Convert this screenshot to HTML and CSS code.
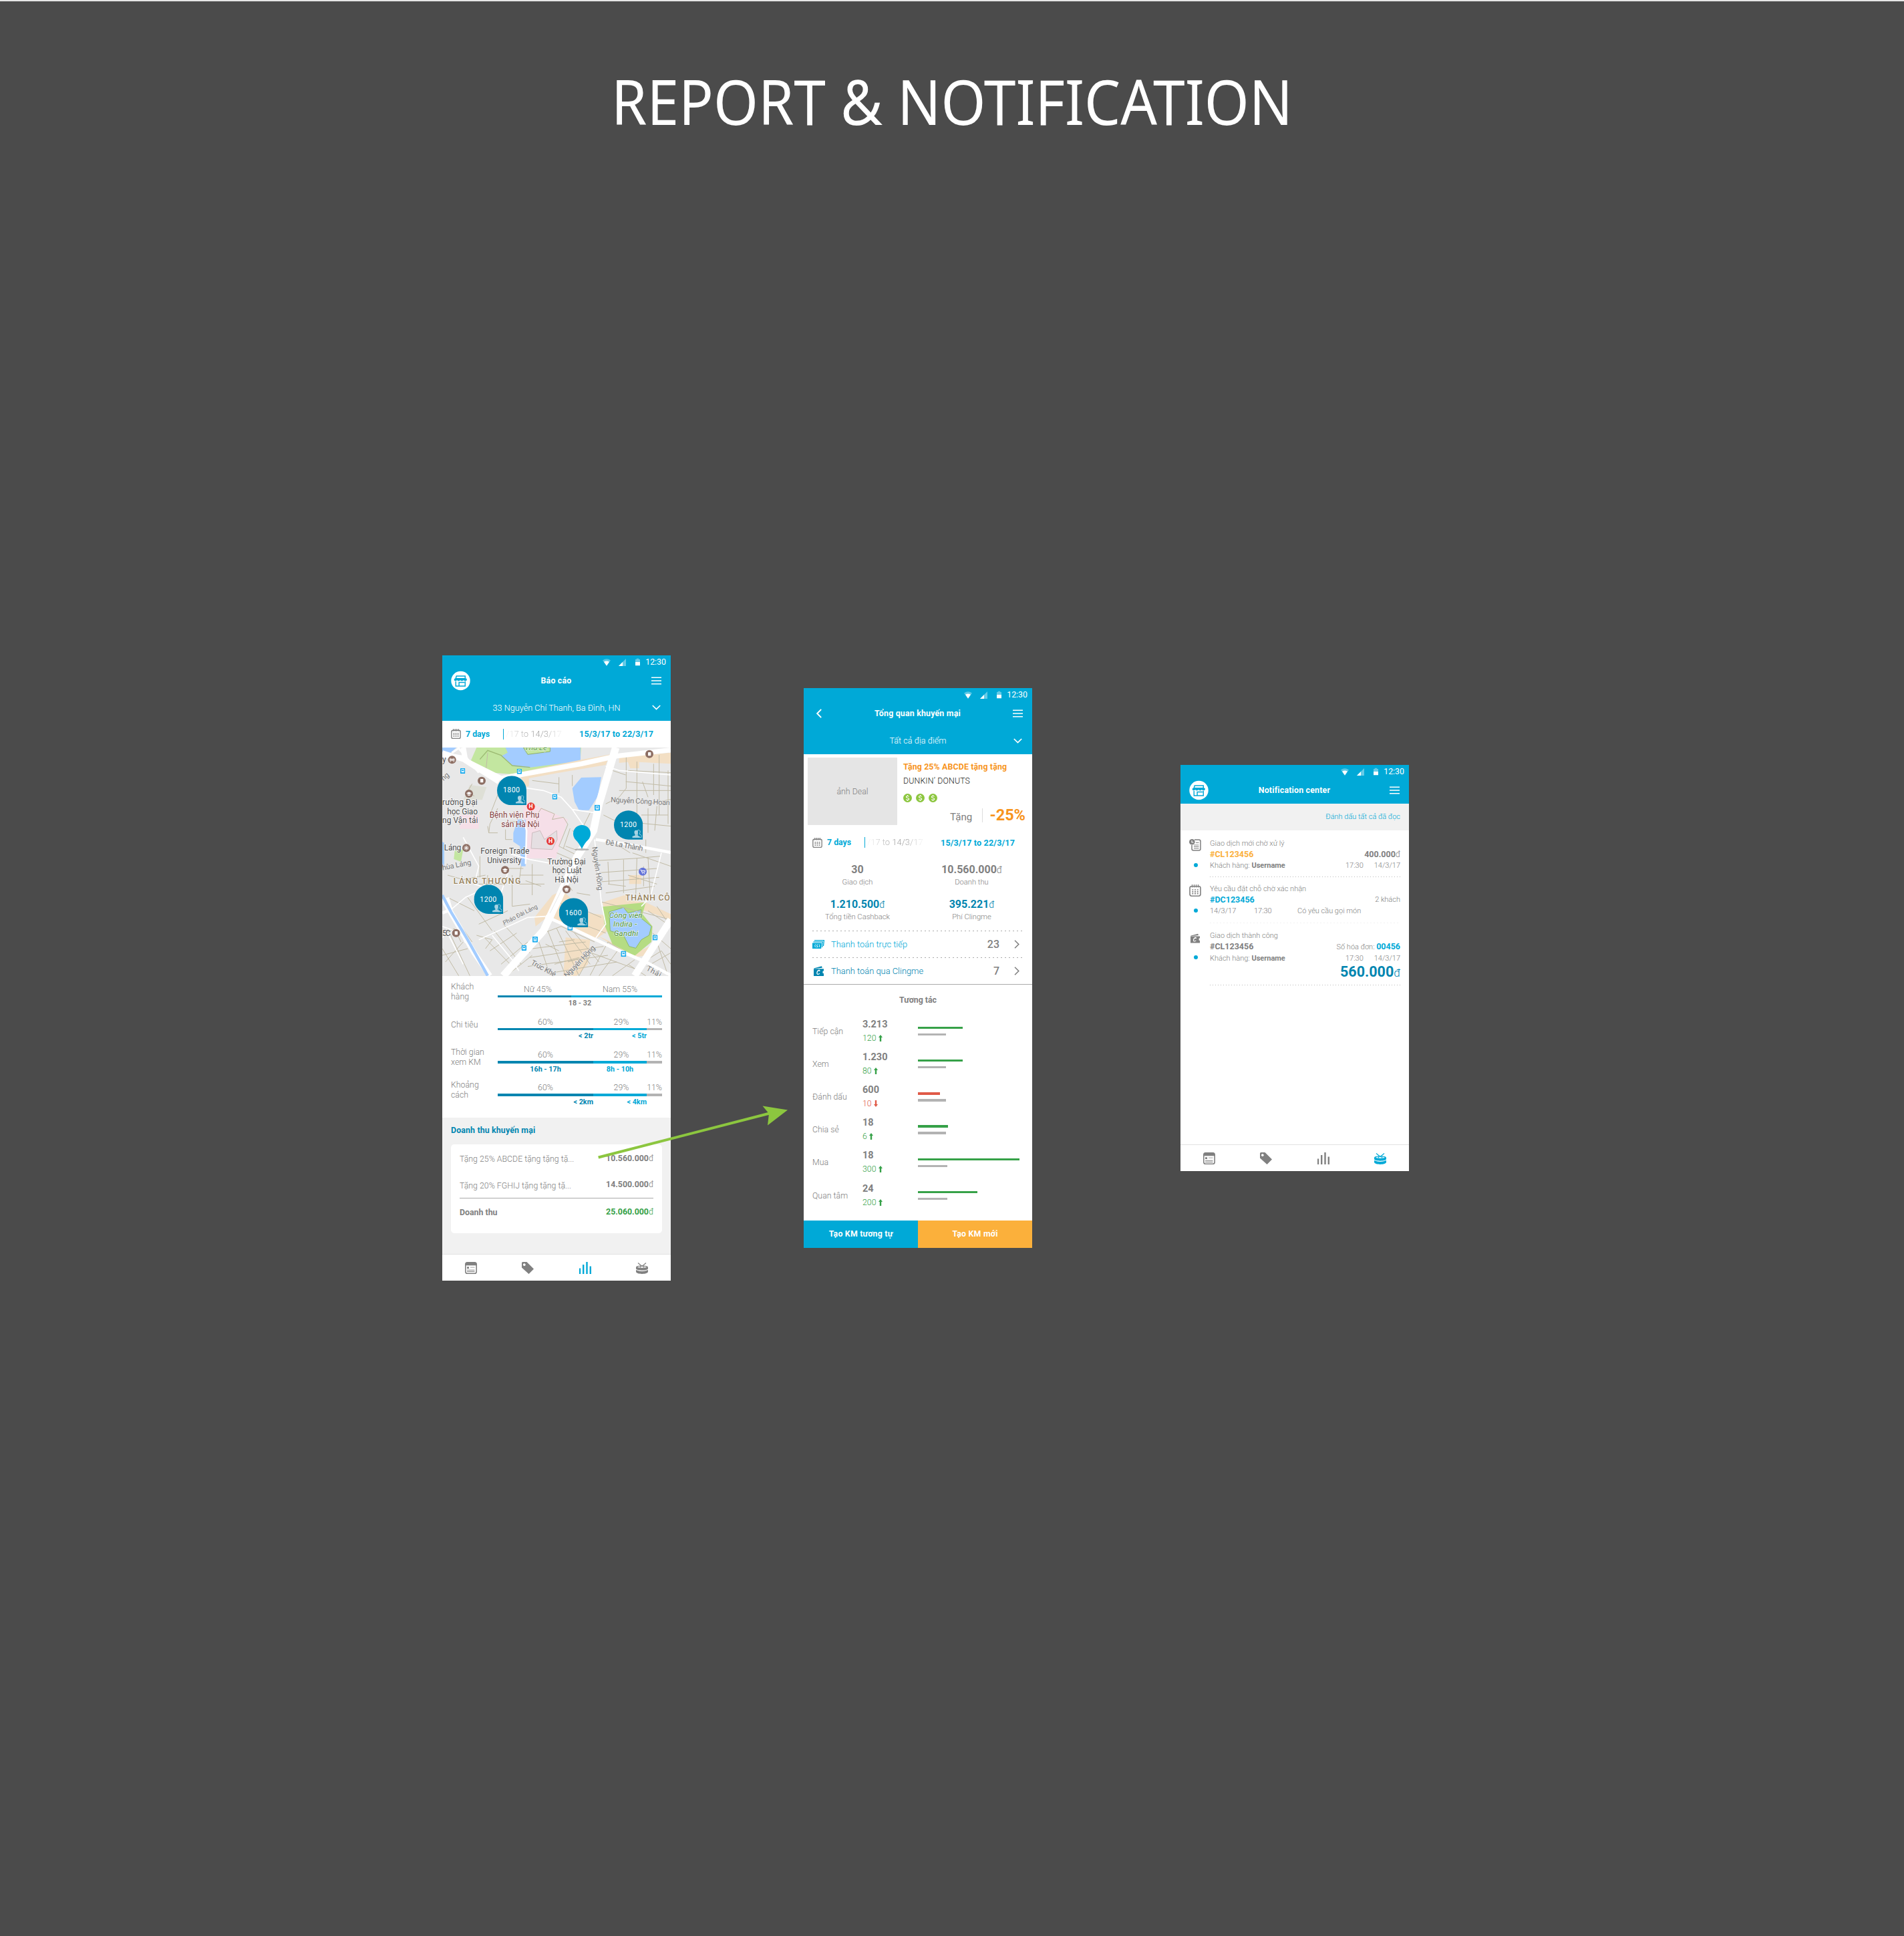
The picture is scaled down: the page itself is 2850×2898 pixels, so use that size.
FILE: index.html
```html
<!DOCTYPE html>
<html lang="vi">
<head>
<meta charset="utf-8">
<title>Report &amp; Notification</title>
<link rel="stylesheet" href="styles.css">
</head>
<body>
<svg class="symbols" aria-hidden="true">
  <symbol id="wifi" viewBox="0 0 12 11"><path d="M0 2.500Q6-2 12 2.500L6 11z" fill="#fff" opacity=".35"/><path d="M2 4.800Q6 2 10 4.800L6 10.500z" fill="#fff"/></symbol>
  <symbol id="signal" viewBox="0 0 11 11"><path d="M0 11L11 0V11z" fill="#fff" opacity=".4"/><path d="M0 11L6 5V11z" fill="#fff"/></symbol>
  <symbol id="battery" viewBox="0 0 8 12"><path d="M0 1.500H2V0H6V1.500H8V6H0z" fill="#fff" opacity=".4"/><path d="M0 6H8V12H0z" fill="#fff"/></symbol>
  <symbol id="shop" viewBox="0 0 30 30"><circle cx="15" cy="15" r="14.700" fill="#fff"/><g fill="none" stroke="#00a9d7" stroke-width="1.500"><path d="M8.500 7.700H22V11.500H7.500z"/><path d="M6 12.200H24M7.500 16V23.300H22V16M12.500 23V17.500H21"/></g><path d="M5 12H24.500V14.500L22 15.500L19.500 14.200L17 15.500L14.500 14.200L12 15.500L9.500 14.200L7 15.500L5 14.500z" fill="#00a9d7"/></symbol>
  <symbol id="menu" viewBox="0 0 15 12"><path d="M0 1.200H15M0 6H15M0 10.800H15" stroke="#fff" stroke-width="1.500"/></symbol>
  <symbol id="down" viewBox="0 0 13 8"><path d="M.8 1L6.500 6.500L12.200 1" fill="none" stroke="#fff" stroke-width="1.700"/></symbol>
  <symbol id="back" viewBox="0 0 8 14"><path d="M7.200 .8L1.200 7L7.200 13.200" fill="none" stroke="#fff" stroke-width="1.900"/></symbol>
  <symbol id="next" viewBox="0 0 8 14"><path d="M.8 .8L7 7L.8 13.200" fill="none" stroke="#808080" stroke-width="1.700"/></symbol>
  <symbol id="calendar" viewBox="0 0 18 18"><rect x="1" y="2.700" width="16" height="14.500" rx="2.600" fill="none" stroke="currentColor" stroke-width="1.600"/><path d="M4.500 0V4.500M7.500 0V4.500M10.500 0V4.500M13.500 0V4.500" stroke="currentColor" stroke-width="1.300"/><path d="M4.300 8H6.300M8 8H10M11.700 8H13.700M4.300 10.800H6.300M8 10.800H10M11.700 10.800H13.700M4.300 13.600H6.300M8 13.600H10M11.700 13.600H13.700" stroke="currentColor" stroke-width="1.700"/></symbol>
  <symbol id="news" viewBox="0 0 18 18"><rect x=".8" y=".8" width="16.400" height="16.400" rx="2.800" fill="none" stroke="currentColor" stroke-width="1.600"/><path d="M1 2.500Q1 .5 3 .5H15Q17 .5 17 2.500V5.200H1z" fill="currentColor"/><path d="M3 7.300H6V10H3z" fill="currentColor"/><path d="M8 8.200H14.500" stroke="currentColor" stroke-width="1.400" opacity=".5"/><path d="M3 12.200H14.500M3 14.500H14.500" stroke="currentColor" stroke-width="1.100"/></symbol>
  <symbol id="tag" viewBox="0 0 18 18"><path fill-rule="evenodd" d="M0 1.500Q0 0 1.500 0H7.500L18 10.500L10.500 18L0 8.500zM3.800 2.200A1.900 1.900 0 1 0 3.810 2.200z" fill="currentColor"/></symbol>
  <symbol id="bars" viewBox="0 0 18 18"><path d="M1 18V9.500M6.200 18V4M11.500 18V0M16.800 18V6.500" stroke="currentColor" stroke-width="2.400"/></symbol>
  <symbol id="drum" viewBox="0 0 18 18"><path d="M0 8C0 4.200 18 4.200 18 8V10C18 13.500 0 13.500 0 10zM0 12Q9 16.200 18 12V14.500C18 19 0 19 0 14.500z" fill="currentColor"/><ellipse cx="9" cy="7.600" rx="6.800" ry="1.300" fill="#fff" opacity=".85"/><path d="M3 1.500L9 6.500L15 1.500M6.500 6V8.500M11.500 6V8.500" fill="none" stroke="currentColor" stroke-width="1.200"/></symbol>
  <symbol id="receipt" viewBox="0 0 18 18"><path d="M8 1H14.500Q17 1 17 3.500V14.500Q17 17 14.500 17H6.500Q4 17 4 14.500V9" fill="none" stroke="currentColor" stroke-width="1.500"/><circle cx="4.300" cy="4.300" r="4.300" fill="currentColor"/><path d="M4 2V5H6.500" fill="none" stroke="#fff" stroke-width="1.100"/><path d="M10 5.500H14.500M7 9H14.500M7 11.500H14.500M7 14H14.500" stroke="currentColor" stroke-width="1"/></symbol>
  <symbol id="wallet" viewBox="0 0 15 15"><path d="M0 3.500L12 .2L12.800 2.800L1 3.900zM0 4.300H15V7.500H13.500V11H15V15H0z" fill="currentColor"/><path d="M8.800 6.200Q5.800 6.500 5 9.500Q4.500 12.500 6.500 12.300Q8 12.200 8.800 11M8.800 6.200V8" fill="none" stroke="#fff" stroke-width="1.300"/></symbol>
  <symbol id="cash" viewBox="0 0 18 13"><path d="M3 .6H17.500L16.500 9M1.500 2.800H15.500L14.800 11" fill="none" stroke="currentColor" stroke-width="1.200"/><path d="M0 4.500H14L13.200 13H0z" fill="currentColor"/><path d="M4.500 6.500Q3 9 4.500 11M10 6.500Q11.500 9 10 11M8.200 7Q6 7 6.500 8.600Q8.500 9.300 8 10.500Q7 11 6 10.500" fill="none" stroke="#fff" stroke-width=".9"/></symbol>
  <symbol id="coin" viewBox="0 0 13 13"><circle cx="6.500" cy="6.500" r="6.500" fill="#8cc63f"/><path d="M8.600 4.300Q6.500 2.700 4.600 4.200Q4 6 6.500 6.500Q9.200 7 8.500 8.800Q6.500 10.400 4.300 8.800M6.500 2V3.300M6.500 9.700V11" fill="none" stroke="#fff" stroke-width="1.100"/></symbol>
  <symbol id="up" viewBox="0 0 6 10"><path d="M3 0L6 4H4.200V10H1.800V4H0z" fill="currentColor"/></symbol>
  <symbol id="people" viewBox="0 0 46 40"><path d="M26 2Q35-2 38 6Q39 14 34 20L45 27V36H26z" fill="none" stroke="#a7d3e3" stroke-width="3"/><path d="M10 14Q9 2 19 2Q28 2 27 14Q26 20 23 23V27L36 32V38H0V32L14 27V23Q11 20 10 14z" fill="#a7d3e3"/></symbol>
  <symbol id="bus" viewBox="0 0 22 24"><rect width="22" height="24" rx="2" fill="#13a9ee"/><rect x="4.500" y="4" width="13" height="15" rx="2" fill="#fff"/><path d="M6.500 7H15.500V12H6.500zM7 14.500H9.500V16.500H7zM12.500 14.500H15V16.500H12.500z" fill="#13a9ee"/></symbol>
  <symbol id="school" viewBox="0 0 38 38"><circle cx="19" cy="19" r="18" fill="#8d6e63"/><path d="M7 17L19 11L31 17L19 23zM12 21L19 25L26 21V26Q19 31 12 26z" fill="#fff"/></symbol>
  <symbol id="place" viewBox="0 0 38 38"><circle cx="19" cy="19" r="18" fill="#8d6e63"/><rect x="13" y="11" width="13" height="16" rx="2" fill="#fff"/></symbol>
  <symbol id="bubble" viewBox="0 0 130 130"><path d="M65 0A65 65 0 0 1 130 65V130H65A65 65 0 0 1 65 0z" fill="#0085b0"/><use href="#people" x="82" y="86" width="43" height="38"/></symbol>
</svg>

<h1 class="title">REPORT &amp; NOTIFICATION</h1>

<main class="canvas">
<section class="phone report">
  <header class="head">
    <div class="status"><svg class="wifi"><use href="#wifi"/></svg><svg class="signal"><use href="#signal"/></svg><svg class="battery"><use href="#battery"/></svg><span>12:30</span></div>
    <div class="bar"><svg class="shop"><use href="#shop"/></svg><b>Báo cáo</b><svg class="menu"><use href="#menu"/></svg></div>
    <div class="place"><span class="address">33 Nguyễn Chí Thanh, Ba Đình, HN</span><svg class="down"><use href="#down"/></svg></div>
  </header>
  <div class="dates"><svg class="cal"><use href="#calendar"/></svg><b class="days">7 days</b><span class="past">/17 to 14/3/17</span><b class="range">15/3/17 to 22/3/17</b></div>

  <svg class="map" viewBox="36 27 1026 1026">
    <rect x="36" y="27" width="1026" height="1026" fill="#e8e8e8"/>
    <!-- parks, water and built-up blocks -->
    <path d="M36 27H100L36 82z" fill="#a3ccff"/>
    <path d="M190 27H660L655 95L385 146L340 146L240 138L165 85z" fill="#c3e6a0"/>
    <path d="M320 27H657V88L420 118L360 112L300 66L330 50z" fill="#a3ccff"/>
    <path d="M400 27L420 58L520 45L520 27z" fill="#c3e6a0" stroke="#8fae68" stroke-width="3"/>
    <path d="M205 80L240 40L300 62L350 108L430 116" fill="none" stroke="#9cba72" stroke-width="4"/>
    <path d="M335 148L660 82L790 58L770 105L560 140L425 165V200L400 205L390 160z" fill="#f3dfc4"/>
    <path d="M830 70L1062 50V100L920 92V120H880L870 92L830 96z" fill="#f3dfc4"/>
    <path d="M400 262L600 350L545 525H410V440L400 390z" fill="#f6dfe8"/><path d="M115 330H200V392H115z" fill="#f6dfe8"/>
    <path d="M440 410L475 400L495 440L550 400L552 440L530 485L435 480z" fill="#e5dfe2" stroke="#cdbcbf" stroke-width="3"/>
    <path d="M160 195L235 205L215 262H130z" fill="#dedfd6"/>
    <path d="M620 210L660 162L750 160L735 245L695 308H650L630 270z" fill="#a3ccff"/>
    <path d="M355 410L375 350H410V560H390L385 470L355 450z" fill="#a3ccff"/>
    <path d="M92 490L130 485L120 540L88 528z" fill="#c3e6a0"/>
    <path d="M36 450L45 455V560L36 580z" fill="#a3ccff"/>
    <path d="M530 690L575 670L690 770L770 780L780 850L720 890L530 790L505 790L455 830L450 790z" fill="#f3dfc4"/>
    <path d="M590 880L700 890L690 1000L640 1052H580z" fill="#f3dfc4"/>
    <path d="M755 722L870 685L860 712L950 722L1062 775V800L945 760L760 740zM875 600H930V640H875z" fill="#f3dfc4"/>
    <path d="M730 870L900 950L1000 905L960 960L890 970z" fill="#f3dfc4"/>
    <path d="M755 742L950 722L935 775L980 830L975 900L900 962L800 910L765 825z" fill="#b5dc83"/>
    <path d="M785 765L850 745L870 770L930 755L925 790L975 830L965 870L930 890L905 928L875 920L850 870L790 850z" fill="#a3ccff" stroke="#8fba65" stroke-width="3"/>
    <!-- small streets -->
    <g fill="none" stroke="#c1bba6" stroke-width="3" stroke-linejoin="round">
      <path d="M240 50L232 130M320 150L250 330M170 190L150 225L180 245M440 175L560 190M560 160V230M620 150V200"/>
      <path d="M480 300L465 325L440 320M480 300L540 325L530 350L580 340L600 372M600 372L560 470L640 510M610 390L580 480M620 400L650 420M590 470L660 495M700 320L650 420M550 500L620 530"/>
      <path d="M862 60V210L830 250L770 280M800 130L860 150M910 90V400M1010 60V330M1050 130V370M870 130L1062 140M860 180L1062 200M830 220H1062M935 180L960 250M985 100V240M760 330L810 355L1062 380M960 300V410M1000 290L990 400M930 330H1050M960 280L1062 260"/>
      <path d="M60 600L130 620L230 600M60 700L180 760M240 380L245 410H285M285 300L250 370L245 410M320 395V440H350M340 360H370M390 560L380 640H495M385 600H490M440 550V690M410 625L480 650M205 515V610M320 570H400M350 600V740L430 730M240 600L235 650M200 640H310"/>
      <path d="M725 535L900 525L1015 515M780 540L785 640M850 530V680M910 525L905 690M960 520L970 700M730 590L1000 570M745 630L1010 610M770 680L990 650M870 600L1000 640M940 560V650M780 640L860 650M800 450L880 500M950 440V500M890 500L1062 560"/>
      <path d="M555 690L520 760M560 720L600 750L580 790M620 670L600 640M640 680L700 690M600 560L640 580M750 720L1062 800"/>
      <path d="M680 760L750 790M690 830L770 860M490 860L570 830L720 900M470 900L520 1050M510 850L590 1052M550 840L650 1052M590 850L700 1000M630 860L740 990M440 930L680 900M430 970L760 920M420 1010L780 960M520 1040L820 990M700 1050L780 900L900 970M740 1052L830 930M650 1052L700 960M800 1052L900 980M680 940L900 1020M560 900L630 890M500 910L560 940M600 990L700 960M540 1000L650 970"/>
      <path d="M36 870L90 840L120 900M36 930L110 1052M60 840L160 1052M130 900L50 990M36 960L150 930M100 800L170 900M150 700L260 850M200 820L330 760M190 870L260 890L230 930M225 880L360 1020M270 850L390 1000M310 820L430 950M250 940L370 860M300 1000L420 900M340 1040L440 960M960 760L1062 830M1000 740L1040 800M980 860L1062 930M940 990L1020 940L1062 1000M955 1010L1060 950M1000 900L1050 1052M870 1000L950 1052"/>
    </g>
    <!-- white roads -->
    <g fill="none" stroke="#fff" stroke-linejoin="round">
      <path d="M36 50L130 80L300 165L660 100L820 65L1062 38" stroke-width="22"/>
      <path d="M36 60L130 75M130 27L140 85L290 180" stroke-width="24"/><path d="M80 50L110 30L200 140" stroke-width="9"/>
      <path d="M815 27L740 280L715 400L640 520L560 700L490 850L310 1052" stroke-width="34"/>
      <path d="M725 440L860 460L1062 498" stroke-width="13"/><path d="M720 440L750 720L770 820L720 890" stroke-width="5"/>
      <path d="M500 785L600 830L800 925L950 990L1062 1050" stroke-width="14"/>
      <path d="M1062 800L900 1052" stroke-width="32"/>
      <path d="M36 700L70 760L180 950L250 1052" stroke-width="24"/><path d="M36 770L75 755L60 700" stroke-width="14"/>
      <path d="M390 205L490 220L570 250L620 305L720 320M620 305L700 420M345 505L430 530L540 550M36 830L120 860L140 905M75 755L140 700L230 660M200 890L420 790L500 785M36 880L60 860L130 1000M260 870L350 980L380 1030M130 430L200 560L180 640L300 680L330 590M770 110L830 130L1062 150M1020 500L970 700L930 740" stroke-width="5"/>
      <path d="M410 550L415 400L400 350" stroke-width="7"/>
    </g>
    <path d="M36 690L75 765L150 890L240 1052" fill="none" stroke="#a3ccff" stroke-width="13"/>
    <path d="M625 560L520 770" stroke="#e8e8e8" stroke-width="3"/>
    <!-- markers -->
    <use href="#bus" x="117" y="120" width="22" height="24"/><use href="#bus" x="371" y="122" width="22" height="24"/><use href="#bus" x="530" y="236" width="22" height="24"/><use href="#bus" x="720" y="284" width="24" height="27"/><use href="#bus" x="598" y="822" width="24" height="26"/><use href="#bus" x="441" y="876" width="24" height="26"/><use href="#bus" x="392" y="914" width="22" height="26"/><use href="#bus" x="838" y="940" width="24" height="27"/><use href="#bus" x="981" y="868" width="22" height="25"/>
    <use href="#place" x="194" y="157" width="38" height="38"/><use href="#place" x="947" y="37" width="38" height="38"/><use href="#place" x="79" y="841" width="38" height="38"/>
    <use href="#school" x="137" y="215" width="38" height="38"/><use href="#school" x="299" y="558" width="38" height="38"/><use href="#school" x="575" y="645" width="38" height="38"/>
    <circle cx="80" cy="82" r="18" fill="#8d6e63"/><path d="M68 82H92M72 74V92M88 74V92M77 76V88M83 76V88" stroke="#fff" stroke-width="3"/>
    <circle cx="144" cy="478" r="18" fill="#8d6e63"/><path d="M144 467V489M133 478H155M136 470L152 486M152 470L136 486" stroke="#fff" stroke-width="3"/>
    <circle cx="936" cy="584" r="18" fill="#6474d8"/><path d="M925 577H930L933 588H944L947 580H932M934 593H937M942 593H945" fill="none" stroke="#fff" stroke-width="3"/>
    <g fill="#e53935"><circle cx="434" cy="292" r="18"/><circle cx="522" cy="447" r="18"/></g>
    <g class="hospital"><text x="434" y="301">H</text><text x="522" y="456">H</text></g>
    <g class="poi">
      <text x="36" y="92" textLength="18">y</text>
      <text x="36" y="285" textLength="158">rường Đại</text><text x="58" y="326" textLength="137">học Giao</text><text x="36" y="367" textLength="160">ng Vận tải</text>
      <text x="44" y="489" textLength="77">Láng</text>
      <text x="208" y="504" textLength="219">Foreign Trade</text><text x="238" y="545" textLength="154">University</text>
      <text x="508" y="551" textLength="172">Trường Đại</text><text x="530" y="592" textLength="132">học Luật</text><text x="541" y="632" textLength="107">Hà Nội</text>
      <text x="36" y="872" textLength="38">5C</text>
    </g>
    <g class="poi med"><text x="248" y="343" textLength="224">Bệnh viện Phụ</text><text x="301" y="383" textLength="171">sản Hà Nội</text></g>
    <g class="green-label"><text x="405" y="39" textLength="102">Thủ Lệ</text><text x="785" y="792" textLength="150">Công viên</text><text x="804" y="832" textLength="106">Indira -</text><text x="806" y="872" textLength="110">Gandhi</text></g>
    <g class="district"><text x="86" y="640" textLength="302">LÁNG THƯỢNG</text><text x="858" y="715" textLength="200">THÀNH CÔ</text></g>
    <g class="street">
      <text transform="translate(42 178) rotate(-42)">ng</text>
      <text transform="translate(792 272) rotate(3)" textLength="266">Nguyễn Công Hoan</text>
      <text transform="translate(768 462) rotate(10)" textLength="170">Đê La Thành</text>
      <text transform="translate(709 474) rotate(82)" textLength="197">Nguyên Hồng</text>
      <text transform="translate(38 578) rotate(-11)" textLength="132">hùa Láng</text>
      <text transform="translate(314 824) rotate(-27)" textLength="170" class="small">Pháo Đài Láng</text>
      <text transform="translate(432 1000) rotate(28)" textLength="122">Trúc Khê</text>
      <text transform="translate(596 1062) rotate(-46)" textLength="185">Nguyên Hồng</text>
      <text transform="translate(950 1026) rotate(28)" textLength="70">Thái</text>
    </g>
    <!-- customer counts -->
    <use href="#bubble" x="282" y="154" width="132" height="132"/><use href="#bubble" x="807" y="309" width="130" height="132"/><use href="#bubble" x="178" y="643" width="132" height="131"/><use href="#bubble" x="560" y="703" width="131" height="131"/>
    <g class="count"><text x="347" y="229">1800</text><text x="872" y="383">1200</text><text x="243" y="719">1200</text><text x="625" y="779">1600</text></g>
    <ellipse cx="663" cy="485" rx="32" ry="5" fill="#888" opacity=".6"/>
    <path d="M663 482Q650 456 634 440A39 39 0 1 1 692 440Q675 456 663 482z" fill="#00a9d7"/>
  </svg>

  <div class="stats">
    <div class="stat two"><span class="name">Khách<br>hàng</span><div class="vals"><span>Nữ 45%</span><span>Nam 55%</span></div><div class="line"><i></i><i></i></div><div class="caps"><b class="age">18 - 32</b></div></div>
    <div class="stat"><span class="name">Chi tiêu</span><div class="vals"><span>60%</span><span>29%</span><span>11%</span></div><div class="line"><i></i><i></i><i></i></div><div class="caps ends"><b>&lt; 2tr</b><b>&lt; 5tr</b></div></div>
    <div class="stat thick"><span class="name">Thời gian<br>xem KM</span><div class="vals"><span>60%</span><span>29%</span><span>11%</span></div><div class="line"><i></i><i></i><i></i></div><div class="caps"><b>16h - 17h</b><b>8h - 10h</b></div></div>
    <div class="stat thick"><span class="name">Khoảng<br>cách</span><div class="vals"><span>60%</span><span>29%</span><span>11%</span></div><div class="line"><i></i><i></i><i></i></div><div class="caps ends"><b>&lt; 2km</b><b>&lt; 4km</b></div></div>
  </div>

  <div class="revenue">
    <h2>Doanh thu khuyến mại</h2>
    <div class="card">
      <div class="item"><span>Tặng 25% ABCDE tặng tặng tặ...</span><span class="amt"><b>10.560.000</b>đ</span></div>
      <div class="item"><span>Tặng 20% FGHIJ tặng tặng tặ...</span><span class="amt"><b>14.500.000</b>đ</span></div>
      <div class="item total"><b>Doanh thu</b><span class="amt green"><b>25.060.000</b>đ</span></div>
    </div>
  </div>
  <nav class="tabs"><svg><use href="#news"/></svg><svg><use href="#tag"/></svg><svg class="on"><use href="#bars"/></svg><svg><use href="#drum"/></svg></nav>
</section>

<section class="phone promo">
  <header class="head">
    <div class="status"><svg class="wifi"><use href="#wifi"/></svg><svg class="signal"><use href="#signal"/></svg><svg class="battery"><use href="#battery"/></svg><span>12:30</span></div>
    <div class="bar"><svg class="back"><use href="#back"/></svg><b>Tổng quan khuyến mại</b><svg class="menu"><use href="#menu"/></svg></div>
    <div class="place"><span class="address">Tất cả địa điểm</span><svg class="down"><use href="#down"/></svg></div>
  </header>
  <div class="deal">
    <div class="photo">ảnh Deal</div>
    <div class="info">
      <b class="deal-name">Tặng 25% ABCDE tặng tặng</b>
      <span class="brand">DUNKIN’ DONUTS</span>
      <div class="coins"><svg><use href="#coin"/></svg><svg><use href="#coin"/></svg><svg><use href="#coin"/></svg></div>
      <div class="gift"><span>Tặng</span><b>-25%</b></div>
    </div>
  </div>
  <div class="dates"><svg class="cal"><use href="#calendar"/></svg><b class="days">7 days</b><span class="past">/17 to 14/3/17</span><b class="range">15/3/17 to 22/3/17</b></div>
  <div class="sums">
    <div><b>30</b><span>Giao dịch</span></div><div><b>10.560.000<i>đ</i></b><span>Doanh thu</span></div>
    <div class="blue"><b>1.210.500<i>đ</i></b><span>Tổng tiền Cashback</span></div><div class="blue"><b>395.221<i>đ</i></b><span>Phí Clingme</span></div>
  </div>
  <div class="pay"><svg class="cash"><use href="#cash"/></svg><span>Thanh toán trực tiếp</span><b>23</b><svg class="next"><use href="#next"/></svg></div>
  <div class="pay dark"><svg class="wallet"><use href="#wallet"/></svg><span>Thanh toán qua Clingme</span><b>7</b><svg class="next"><use href="#next"/></svg></div>
  <div class="acts">
    <h2>Tương tác</h2>
    <div class="act"><span>Tiếp cận</span><div class="num"><b>3.213</b><em>120<svg><use href="#up"/></svg></em></div><div class="meter"><i style="width:67px"></i><i style="width:42px"></i></div></div>
    <div class="act"><span>Xem</span><div class="num"><b>1.230</b><em>80<svg><use href="#up"/></svg></em></div><div class="meter"><i style="width:67px"></i><i style="width:42px"></i></div></div>
    <div class="act loss thick"><span>Đánh dấu</span><div class="num"><b>600</b><em>10<svg><use href="#up"/></svg></em></div><div class="meter"><i style="width:33px"></i><i style="width:42px"></i></div></div>
    <div class="act thick"><span>Chia sẻ</span><div class="num"><b>18</b><em>6<svg><use href="#up"/></svg></em></div><div class="meter"><i style="width:45px"></i><i style="width:42px"></i></div></div>
    <div class="act"><span>Mua</span><div class="num"><b>18</b><em>300<svg><use href="#up"/></svg></em></div><div class="meter"><i style="width:152px"></i><i style="width:44px"></i></div></div>
    <div class="act"><span>Quan tâm</span><div class="num"><b>24</b><em>200<svg><use href="#up"/></svg></em></div><div class="meter"><i style="width:89px"></i><i style="width:44px"></i></div></div>
  </div>
  <div class="buttons"><b>Tạo KM tương tự</b><b>Tạo KM mới</b></div>
</section>

<section class="phone notes">
  <header class="head">
    <div class="status"><svg class="wifi"><use href="#wifi"/></svg><svg class="signal"><use href="#signal"/></svg><svg class="battery"><use href="#battery"/></svg><span>12:30</span></div>
    <div class="bar"><svg class="shop"><use href="#shop"/></svg><b>Notification center</b><svg class="menu"><use href="#menu"/></svg></div>
  </header>
  <div class="mark"><span>Đánh dấu tất cả đã đọc</span></div>
  <article class="note n1">
    <div class="side"><svg><use href="#receipt"/></svg><i></i></div>
    <div class="body">
      <p>Giao dịch mới chờ xử lý</p>
      <p class="row"><b class="code yellow">#CL123456</b><span class="sum"><b>400.000</b>đ</span></p>
      <p class="row"><span>Khách hàng: <b>Username</b></span><span class="when"><span>17:30</span><span>14/3/17</span></span></p>
    </div>
  </article>
  <article class="note n2">
    <div class="side"><svg><use href="#calendar"/></svg><i></i></div>
    <div class="body">
      <p>Yêu cầu đặt chỗ chờ xác nhận</p>
      <p class="row"><b class="code cyan">#DC123456</b><span>2 khách</span></p>
      <p class="cols"><span>14/3/17</span><span>17:30</span><span>Có yêu cầu gọi món</span></p>
    </div>
  </article>
  <article class="note n3">
    <div class="side"><svg class="purse"><use href="#wallet"/></svg><i></i></div>
    <div class="body">
      <p>Giao dịch thành công</p>
      <p class="row"><b class="code">#CL123456</b><span>Số hóa đơn: <b class="cyan bill">00456</b></span></p>
      <p class="row"><span>Khách hàng: <b>Username</b></span><span class="when"><span>17:30</span><span>14/3/17</span></span></p>
      <p class="big"><b>560.000</b>đ</p>
    </div>
  </article>
  <nav class="tabs"><svg><use href="#news"/></svg><svg><use href="#tag"/></svg><svg><use href="#bars"/></svg><svg class="on"><use href="#drum"/></svg></nav>
</section>

<svg class="arrow" viewBox="0 0 300 90"><path d="M5.700 86.500L262 20.500" stroke="#8cc63f" stroke-width="4"/><path d="M289 15.500L251.500 9.500L261 21L259 38.500z" fill="#8cc63f"/></svg>
</main>
</body>
</html>
```
FILE: styles.css
```css
* { box-sizing: border-box; }
body { margin: 0; width: 2850px; height: 2898px; overflow: hidden; background: #4b4b4b; border-top: 2px solid #e6e6e6; font: 300 12.35px Roboto, sans-serif; color: #808080; position: relative; }
h1, h2, p { margin: 0; font-size: inherit; }
b { font-weight: 700; }
i, em { font-style: normal; }
svg { display: block; flex: none; }
.symbols { position: absolute; width: 0; height: 0; }

.title { padding-top: 85px; text-align: center; color: #fff; font: 400 94px/128px "Noto Sans", sans-serif; transform: scaleX(.912); white-space: nowrap; }

/* free canvas with the three screens */
.phone { position: absolute; width: 342px; background: #fff; display: flex; flex-direction: column; white-space: nowrap; }
.report { left: 662px; top: 979px; height: 936px; }
.promo { left: 1203px; top: 1028px; height: 838px; }
.notes { left: 1767px; top: 1143px; height: 608px; }
.arrow { position: absolute; left: 890px; top: 1644px; width: 300px; height: 90px; }

.head { background: #00a9d7; color: #fff; }
.status { height: 20px; display: flex; justify-content: flex-end; align-items: center; padding-right: 7px; font-weight: 400; }
.wifi { width: 12px; height: 11px; margin-right: 12px; }
.signal { width: 11px; height: 11px; margin-right: 14px; }
.battery { width: 7px; height: 12px; margin-right: 8px; }
.bar { height: 38px; padding: 0 14px 2px 13px; display: grid; grid-template-columns: 30px 1fr 30px; align-items: center; text-align: center; letter-spacing: .2px; }
.shop { width: 29px; height: 30px; }
.menu { width: 15px; height: 12px; justify-self: end; }
.back { width: 8px; height: 14px; margin-left: 6px; }
.place { height: 40px; padding: 0 15px 0 28px; display: grid; grid-template-columns: 1fr 13px; align-items: center; text-align: center; }
.address { font-size: 12.700px; }
.promo .place { height: 41px; }
.down { width: 13px; height: 8px; }

.dates { height: 40px; padding-left: 13px; display: flex; align-items: center; color: #00a9d7; }
.cal { width: 15px; height: 15px; color: #808080; margin-right: 7px; }
.days { width: 56px; }
.range { font-size: 12.600px; letter-spacing: .15px; }
.past { width: 114px; height: 16px; line-height: 16px; font-size: 13px; border-left: 1px solid #00a9d7; padding-left: 3px; color: transparent; background: linear-gradient(90deg, #fff 0, #999 45px, #999 60px, #eee 84px); -webkit-background-clip: text; background-clip: text; }
.map { width: 342px; height: 342px; font-family: Roboto, sans-serif; }
.poi { font-size: 36px; font-weight: 400; fill: #4d4d4d; stroke: #fff; stroke-width: 5px; paint-order: stroke; stroke-opacity: .7; }
.med { fill: #853d40; }
.green-label { font-size: 35px; font-style: italic; font-weight: 400; fill: #4c9130; stroke: #fff; stroke-width: 3px; paint-order: stroke; }
.district { font-size: 37px; font-weight: 500; fill: #96805a; stroke: #fff; stroke-width: 4px; paint-order: stroke; }
.street { font-size: 33px; font-weight: 400; fill: #777; stroke: #eee; stroke-width: 4px; paint-order: stroke; }
.small { font-size: 27px; }
.hospital { font-size: 26px; font-weight: 700; fill: #fff; text-anchor: middle; }
.count { font-size: 32px; font-weight: 400; fill: #fff; text-anchor: middle; letter-spacing: 1px; }

.stats { height: 213px; }
.stat { height: 49px; padding: 0 13px; display: grid; grid-template-columns: 70px 246px; grid-template-rows: 29px 3px 17px; }
.thick { --bar: 4px; }
.stat.thick { grid-template-rows: 29px 4px 16px; }
.name { grid-row: 1 / 4; align-self: center; line-height: 15px; }
.vals, .line, .caps { grid-column: 2; display: grid; grid-template-columns: 143px 80px 23px; text-align: center; }
.two .vals, .two .line { grid-template-columns: 110px 136px; }
.vals { padding-top: 11px; line-height: 18px; }
.vals span:nth-child(2) { padding-left: 4px; }
.vals span:nth-child(3) { justify-self: end; }
.two .vals { padding-left: 5px; }
.two .vals span:nth-child(2) { padding-left: 0; }
.line i { background: #0085b0; }
.line i:nth-child(2) { background: #00a9d7; }
.line i:nth-child(3) { background: #b3b3b3; }
.caps { font-size: 10.800px; line-height: 18px; color: #0085b0; }
.caps b:nth-child(2) { color: #00a9d7; }
.caps .age { grid-column: 1 / 4; color: #808080; }
.ends { text-align: right; }

.revenue { height: 204px; background: #f1f1f1; padding: 10px 13px 0; }
.revenue h2 { font-weight: 700; line-height: 18px; color: #0085b0; letter-spacing: .15px; }
.card { margin-top: 12px; height: 133px; border-radius: 5px; background: #fff; padding: 1px 13px 0; }
.item { height: 40px; display: flex; justify-content: space-between; align-items: center; padding-top: 2px; }
.item:nth-child(2) { border-bottom: 1px solid #aaa; }
.amt { padding-bottom: 3px; }
.green { color: #36a148; }

.tabs { margin-top: auto; height: 40px; border-top: 1px solid #e2e2e2; display: grid; grid-template-columns: repeat(4, 1fr); place-items: center; }
.tabs svg { width: 18px; height: 18px; }
.on { color: #00a9d7; }

.deal { height: 112px; padding: 5px 6px 0; display: flex; }
.photo { width: 134px; height: 101px; background: #e5e5e5; display: grid; place-items: center; }
.info { flex: 1; padding: 6px 4px 0 9px; display: flex; flex-direction: column; }
.deal-name { color: #f7941d; line-height: 16px; letter-spacing: .15px; }
.brand { margin-top: 5px; line-height: 16px; color: #222; letter-spacing: .15px; }
.coins { margin-top: 11px; display: flex; gap: 6px; }
.coins svg { width: 13px; height: 13px; }
.gift { margin-top: 8px; display: flex; justify-content: flex-end; align-items: baseline; font-size: 15.200px; font-weight: 400; line-height: 28px; }
.gift b { margin-left: 15px; padding-left: 10px; font-size: 23.500px; line-height: 21px; color: #f7941d; border-left: 1px solid #ddd; }
.sums { height: 112px; padding-top: 11px; display: grid; grid-template-columns: 161px 181px; grid-template-rows: 38px 38px; row-gap: 14px; text-align: center; }
.sums div { display: flex; flex-direction: column; font-size: 11.200px; line-height: 18px; }
.sums b { font-size: 16px; line-height: 20px; }
.sums i { font-size: 14px; font-weight: 300; }
.blue b { color: #0085b0; }
.pay { height: 40px; margin: 0 12px 0 13px; padding-right: 7px; display: flex; align-items: center; color: #00a9d7; font-size: 12.900px; background: repeating-linear-gradient(90deg, #aaa 0 2px, transparent 2px 6px) 0 0 / 100% 1px no-repeat; }
.pay.dark { color: #0085b0; }
.pay span { flex: 1; }
.pay b { font-size: 16px; font-weight: 500; color: #808080; margin-right: 22px; }
.next { width: 8px; height: 13px; }
.cash { width: 18px; height: 13px; margin-right: 10px; }
.wallet { width: 15px; height: 15px; margin: 0 11px 0 2px; }
.acts { height: 354px; border-top: 1px solid #aaa; }
.acts h2 { line-height: 46px; height: 45px; text-align: center; font-weight: 700; }
.act { height: 49.200px; padding-left: 13px; display: grid; grid-template-columns: 75px 83px 1fr; align-items: center; }
.num { line-height: 20px; }
.num b { display: block; font-size: 14.500px; }
.num em { display: flex; align-items: center; gap: 3px; color: #36a148; }
.num svg { width: 6px; height: 10px; }
.meter i { display: block; height: var(--bar, 3px); background: #36a148; }
.meter i + i { margin-top: calc(10px - var(--bar, 3px)); background: #b3b3b3; }
.loss em { color: #e05a48; }
.loss .meter i:first-child { background: #e05a48; }
.loss svg { transform: rotate(180deg); }
.buttons { margin-top: auto; height: 41px; display: grid; grid-template-columns: 1fr 1fr; text-align: center; line-height: 41px; letter-spacing: .2px; color: #fff; background: linear-gradient(90deg, #00a9d7 50%, #fbb03b 50%); }

.mark { height: 40px; background: #f1f1f1; padding-right: 13px; line-height: 40px; text-align: right; color: #00a9d7; font-size: 11px; }
.note { display: grid; grid-template-columns: 31px 1fr; padding: 0 13px; font-size: 11px; line-height: 16.300px; }
.side { display: flex; flex-direction: column; }
.side svg { width: 18px; height: 18px; margin-top: 1px; }
.side .purse { width: 14px; height: 15px; margin: 4px 2px 0; }
.side i { width: 6px; height: 6px; border-radius: 50%; background: #00a9d7; margin: 18px 0 0 7px; }
.body { background: repeating-linear-gradient(90deg, #bbb 0 1px, transparent 1px 4px) 0 100% / 100% 1px no-repeat; }
.n1 { height: 70px; }
.n1 > div { padding-top: 12px; }
.n2 { height: 69px; }
.n2 > div { padding-top: 10px; }
.n3 { height: 93px; }
.n3 > div { padding-top: 11px; }
.n2 .body { background: repeating-linear-gradient(90deg, #f2f2f2 0 2px, transparent 2px 5px) 0 100% / 100% 1px no-repeat; }
.row { display: flex; justify-content: space-between; }
.code, .sum, .bill { font-size: 12.500px; }
.yellow { color: #fbb03b; }
.cyan { color: #00a9d7; }
.when { display: flex; gap: 16px; }
.cols { display: grid; grid-template-columns: 66px 65px 1fr; }
.big { text-align: right; font-size: 17px; line-height: 24px; color: #0085b0; }
.big b { font-size: 21.500px; }
```
